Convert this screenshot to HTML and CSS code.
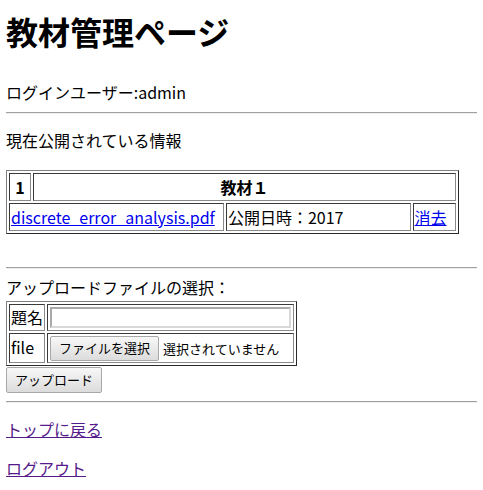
FILE: index.html
```html
<!DOCTYPE html>
<html lang="ja">
<head>
<meta charset="utf-8">
<title>教材管理ページ</title>
<link rel="stylesheet" href="styles.css">
</head>
<body>
<h1 class="title">教材管理ページ</h1>
<p class="user">ログインユーザー:admin</p>
<hr class="rule rule-top">
<p class="info">現在公開されている情報</p>
<table class="list">
  <colgroup>
    <col class="c1"><col class="c2"><col class="c3"><col class="c4">
  </colgroup>
  <tr>
    <th class="cell">1</th>
    <th class="cell" colspan="3">教材１</th>
  </tr>
  <tr>
    <td class="cell" colspan="2"><a class="link" href="#">discrete_error_analysis.pdf</a></td>
    <td class="cell">公開日時：2017</td>
    <td class="cell"><a class="link" href="#">消去</a></td>
  </tr>
</table>
<hr class="rule rule-mid">
<form class="upload">
  <div class="upload-label">アップロードファイルの選択：</div>
  <table class="form">
    <tr>
      <td class="cell fcell">題名</td>
      <td class="cell fcell"><input class="text" type="text"></td>
    </tr>
    <tr>
      <td class="cell fcell frow2">file</td>
      <td class="cell fcell frow2 file-cell"><button type="button" class="btn filebtn">ファイルを選択</button><span class="nofile">選択されていません</span></td>
    </tr>
  </table>
  <button type="button" class="btn submit">アップロード</button>
</form>
<hr class="rule rule-bottom">
<p class="nav nav-first"><a class="link visited" href="#">トップに戻る</a></p>
<p class="nav"><a class="link visited" href="#">ログアウト</a></p>
</body>
</html>
```
FILE: styles.css
```css
html, body {
  background: #fff;
}
body {
  margin: 0 6px;
  font-family: "Noto Sans CJK JP", "Noto Sans", sans-serif;
  font-size: 16px;
  line-height: 23px;
  color: #000;
}
.title {
  margin: 8px 0 0 0;
  font-size: 32px;
  line-height: 46px;
  font-weight: 700;
}
.user {
  margin: 27px 0 0 0;
}
.rule {
  border: 0;
  border-top: 1px solid #a0a0a0;
  border-bottom: 1px solid #eeeeee;
  height: 0;
  margin: 0;
}
.rule-top { margin-top: 8px; }
.info { margin: 15px 0 0 0; }
.list {
  margin-top: 18px;
  width: 453px;
  table-layout: fixed;
  border-collapse: separate;
  border-spacing: 2px;
  border: 1px solid;
  border-color: #808080 #2a2a2a #2a2a2a #808080;
}
.c1 { width: 22px; }
.c2 { width: 189px; }
.c3 { width: 183px; }
.c4 { width: 43px; }
.cell {
  border: 1px solid;
  border-color: #3a3a3a #8a8a8a #8a8a8a #3a3a3a;
  padding: 1px;
  text-align: left;
  white-space: nowrap;
  height: 24px;
}
th.cell { text-align: center; font-weight: 700; }
.link { color: #0000ee; text-decoration: underline; }
.link.visited { color: #551a8b; }
.rule-mid { margin-top: 33px; }
.upload-label { margin-top: 7px; }
.form {
  margin-top: 2px;
  border-collapse: separate;
  border-spacing: 2px;
  border: 1px solid;
  border-color: #808080 #2a2a2a #2a2a2a #808080;
}
.fcell { padding: 1px; height: 23px; }
.fcell.frow2 { height: 24px; }
.text {
  display: block;
  width: 241px;
  height: 21px;
  box-sizing: border-box;
  margin: 1px;
  border: 2px solid;
  border-color: #a9a9a9 #d8d8d8 #d8d8d8 #a9a9a9;
  font: inherit;
  padding: 0;
}
.file-cell {
  font-size: 13px;
}
.btn {
  font-family: "Noto Sans CJK JP", "Noto Sans", sans-serif;
  font-size: 13px;
  line-height: 18px;
  color: #000;
  background: linear-gradient(#f7f7f7, #dcdcdc);
  border: 1px solid #a8a8a8;
  border-radius: 2px;
  padding: 0 8px;
  margin: 0;
  box-sizing: border-box;
}
.filebtn {
  height: 25px;
  width: 109px;
  margin: 0 4px 0 1px;
  vertical-align: middle;
}
.nofile { font-size: 13px; vertical-align: middle; }
.submit {
  margin-top: 1px;
  display: block;
  height: 26px;
  width: 96px;
}
.rule-bottom { margin-top: 8px; }
.nav { margin: 16px 0 0 0; }
.nav-first { margin-top: 15px; }
```
